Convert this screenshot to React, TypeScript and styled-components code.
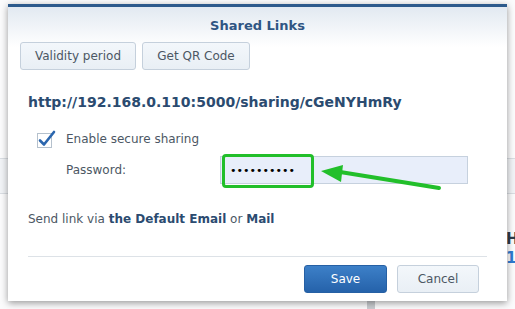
import React from 'react';
import styled, { createGlobalStyle } from 'styled-components';

// --- GLOBAL ---
const GlobalStyle = createGlobalStyle`
  html, body { margin: 0; padding: 0; }
  body { font-family: "DejaVu Sans", Verdana, sans-serif; background: #f7f8fa; }
`;

const TEXT = '#4c5764';
const BLUE_TEXT = '#2b4b70';

// --- BACKDROP (desktop behind the modal) ---
const Desktop = styled.div`
  position: relative; width: 515px; height: 309px; overflow: hidden;
  background: #fbfbfc; box-sizing: border-box; padding: 4px 8px 0 8px;
`;

const BackRule = styled.div<{ $top: number }>`
  position: absolute; left: 0; right: 0; top: ${p => p.$top}px;
  height: 1px; background: #d9dde2;
`;

const BackBand = styled.div`
  position: absolute; left: 0; right: 0; top: 159px; height: 34px; background: #f1f3f6;
`;

const BackLabel = styled.div<{ $top: number; $color: string }>`
  position: absolute; left: 506px; top: ${p => p.$top}px;
  font-weight: bold; font-size: 15px; color: ${p => p.$color};
`;

const BackBar = styled.div`
  position: absolute; left: 367px; top: 300px; width: 8px; height: 9px; background: #c9ccd0;
`;

// --- DIALOG ---
const Dialog = styled.div`
  position: relative; z-index: 2;
  width: 499px; height: 297px; box-sizing: border-box;
  background: #fff; border-top: 3px solid #2d5a8c;
  box-shadow: 0 2px 7px rgba(0, 0, 0, 0.4);
  display: flex; flex-direction: column;
`;

const Header = styled.div`
  background: linear-gradient(to bottom, #e2e9f1 0%, #ffffff 40px);
  padding: 10px 12px 0 12px;
`;

const Title = styled.div`
  text-align: center; font-weight: bold; font-size: 13px; color: #2f5583;
  height: 18px; line-height: 18px; margin-bottom: 7px;
`;

const ButtonRow = styled.div`
  display: flex; gap: 6px;
`;

const Button = styled.button<{ $primary?: boolean; $w: number }>`
  width: ${p => p.$w}px; height: 28px; box-sizing: border-box;
  font-family: inherit; font-size: 12px; padding: 0;
  border-radius: 3px; cursor: pointer;
  border: 1px solid ${p => (p.$primary ? '#2660a4' : '#c5d0dc')};
  background: ${p =>
    p.$primary
      ? 'linear-gradient(to bottom, #3d80c8, #2562aa)'
      : 'linear-gradient(to bottom, #f3f7fb, #e9eff5)'};
  color: ${p => (p.$primary ? '#fff' : TEXT)};
`;

const Body = styled.div`
  padding: 0 20px; display: flex; flex-direction: column;
`;

const Url = styled.div`
  margin-top: 24px; font-weight: bold; font-size: 14px; color: ${BLUE_TEXT};
  height: 16px; line-height: 16px;
`;

const Row = styled.div<{ $mt: number }>`
  display: flex; align-items: center; margin-top: ${p => p.$mt}px;
  font-size: 12px; color: ${TEXT};
`;

const CheckWrap = styled.div`
  width: 20px; height: 20px; margin-left: 9px; margin-right: 9px;
`;

const FieldLabel = styled.div`
  width: 154px; padding-left: 38px;
`;

const FieldWrap = styled.div`
  position: relative;
`;

const PasswordInput = styled.div`
  width: 248px; height: 28px; box-sizing: border-box;
  background: #e8eefa; border: 1px solid #c6d1de;
  display: flex; align-items: center; padding-left: 9px;
`;

const Dots = styled.span`
  font-size: 11px; letter-spacing: 0; color: #000; line-height: 1;
`;

const Highlight = styled.div`
  position: absolute; left: 2px; top: -2px; width: 92px; height: 34px;
  box-sizing: border-box; border: 3px solid #22bf2a; border-radius: 4px;
`;

const Arrow = styled.svg`
  position: absolute; left: 100px; top: 8px; overflow: visible;
`;

const SendLine = styled.div`
  margin-top: 27px; font-size: 12px; color: ${TEXT};
  height: 16px; line-height: 16px;
  b { color: ${BLUE_TEXT}; }
`;

const Separator = styled.div`
  margin-top: 29px; height: 1px; background: #dde2e7;
`;

const Footer = styled.div`
  display: flex; justify-content: flex-end; gap: 10px;
  padding: 8px 28px 0 0;
`;

export default function App() {
  return (
    <>
      <GlobalStyle />
      <Desktop>
        <BackBand />
        <BackRule $top={158} />
        <BackRule $top={193} />
        <BackLabel $top={230} $color="#2e3b4a">H</BackLabel>
        <BackLabel $top={249} $color="#2e7bd0">1</BackLabel>
        <BackBar />

        <Dialog>
          <Header>
            <Title>Shared Links</Title>
            <ButtonRow>
              <Button $w={116}>Validity period</Button>
              <Button $w={108}>Get QR Code</Button>
            </ButtonRow>
          </Header>

          <Body>
            <Url>http://192.168.0.110:5000/sharing/cGeNYHmRy</Url>

            <Row $mt={19}>
              <CheckWrap>
                <svg width="20" height="20" viewBox="0 0 20 20">
                  <rect x="0.5" y="4.5" width="14" height="14" fill="#fff" stroke="#b5c1cd" />
                  <path d="M3 11.5 L7 15.5 L17 3" fill="none" stroke="#2b66ae" strokeWidth="2.6" strokeLinecap="round" strokeLinejoin="round" />
                </svg>
              </CheckWrap>
              <span>Enable secure sharing</span>
            </Row>

            <Row $mt={7}>
              <FieldLabel>Password:</FieldLabel>
              <FieldWrap>
                <PasswordInput>
                  <Dots>••••••••••</Dots>
                </PasswordInput>
                <Highlight />
                <Arrow width="125" height="26" viewBox="0 0 125 26">
                  <line x1="119" y1="24" x2="14" y2="7" stroke="#22bf2a" strokeWidth="4" strokeLinecap="round" />
                  <polygon points="1,7 23,1 21,18" fill="#22bf2a" />
                </Arrow>
              </FieldWrap>
            </Row>

            <SendLine>
              Send link via <b>the Default Email</b> or <b>Mail</b>
            </SendLine>

            <Separator />
          </Body>

          <Footer>
            <Button $primary $w={83}>Save</Button>
            <Button $w={82}>Cancel</Button>
          </Footer>
        </Dialog>
      </Desktop>
    </>
  );
}
